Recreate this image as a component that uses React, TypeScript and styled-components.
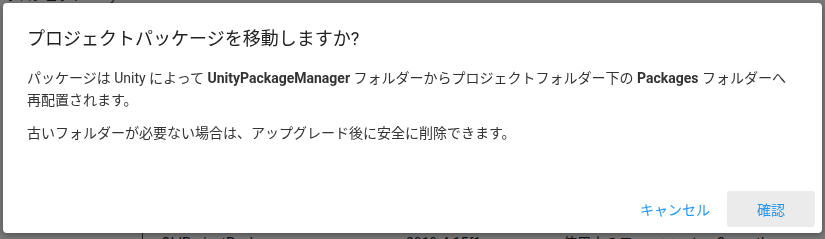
import React from 'react'
import styled, { createGlobalStyle } from 'styled-components'

const GlobalStyle = createGlobalStyle`
  html, body {
    margin: 0;
    padding: 0;
    overflow: hidden;
  }
  body {
    font-family: Roboto, 'Noto Sans CJK JP', sans-serif;
    background-color: #fff;
  }
`

const Page = styled.div`
	width: 825px;
	height: 239px;
	display: flex;
	flex-direction: column;
	justify-content: space-between;
	overflow: hidden;
	color: #222;
	font-size: 14px;
`

const TopBar = styled.div`
	margin-top: -12px;
	padding-left: 6px;
	line-height: 16px;
	font-size: 13px;
`

const ListRow = styled.div`
	display: grid;
	grid-template-columns: 142px 264px 157px 154px 1fr;
	margin-bottom: -14px;
	height: 20px;
	line-height: 20px;
	font-size: 14px;
`

const Cell = styled.div<{ $divider?: boolean }>`
	padding-left: ${(p) => (p.$divider ? '18px' : '0')};
	border-left: ${(p) => (p.$divider ? '1px solid #444' : 'none')};
	white-space: nowrap;
`

const Overlay = styled.div`
	position: fixed;
	inset: 0;
	background-color: rgba(0, 0, 0, 0.53);
	padding: 3px 3px 6px 3px;
	display: flex;
	box-sizing: border-box;
`

const Dialog = styled.div`
	flex: 1;
	background-color: #fff;
	border-radius: 4px;
	box-shadow: 0 2px 6px rgba(0, 0, 0, 0.35);
	display: flex;
	flex-direction: column;
`

const Content = styled.div`
	padding: 24px 24px 0 24px;
	flex: 1;
`

const Title = styled.h2`
	margin: 0 0 16px 0;
	font-size: 18px;
	font-weight: 400;
	line-height: 24px;
	color: #212121;
`

const Paragraph = styled.p`
	margin: 0 0 11px 0;
	font-size: 14px;
	line-height: 22px;
	color: #333;
`

const Actions = styled.div`
	display: flex;
	justify-content: flex-end;
	gap: 8px;
	padding: 0 7px 6px 0;
`

const ActionButton = styled.button<{ $filled?: boolean }>`
	width: 88px;
	height: 36px;
	border: none;
	border-radius: 3px;
	background-color: ${(p) => (p.$filled ? '#ebebeb' : 'transparent')};
	color: #2196f3;
	font-family: Roboto, 'Noto Sans CJK JP', sans-serif;
	font-size: 14px;
	cursor: pointer;
	padding: 0;
`

export default function App() {
	return (
		<>
			<GlobalStyle />
			<Page>
				<TopBar>プロジェクト Unity Hub</TopBar>
				<ListRow>
					<Cell />
					<Cell $divider>OldProjectPackage</Cell>
					<Cell>2019.4.15f1</Cell>
					<Cell>使用中のフォーマット</Cell>
					<Cell>2 months ago</Cell>
				</ListRow>
			</Page>
			<Overlay>
				<Dialog>
					<Content>
						<Title>プロジェクトパッケージを移動しますか?</Title>
						<Paragraph>
							パッケージは Unity によって <b>UnityPackageManager</b> フォルダーからプロジェクトフォルダー下の{' '}
							<b>Packages</b> フォルダーへ再配置されます。
						</Paragraph>
						<Paragraph>古いフォルダーが必要ない場合は、アップグレード後に安全に削除できます。</Paragraph>
					</Content>
					<Actions>
						<ActionButton>キャンセル</ActionButton>
						<ActionButton $filled>確認</ActionButton>
					</Actions>
				</Dialog>
			</Overlay>
		</>
	)
}
